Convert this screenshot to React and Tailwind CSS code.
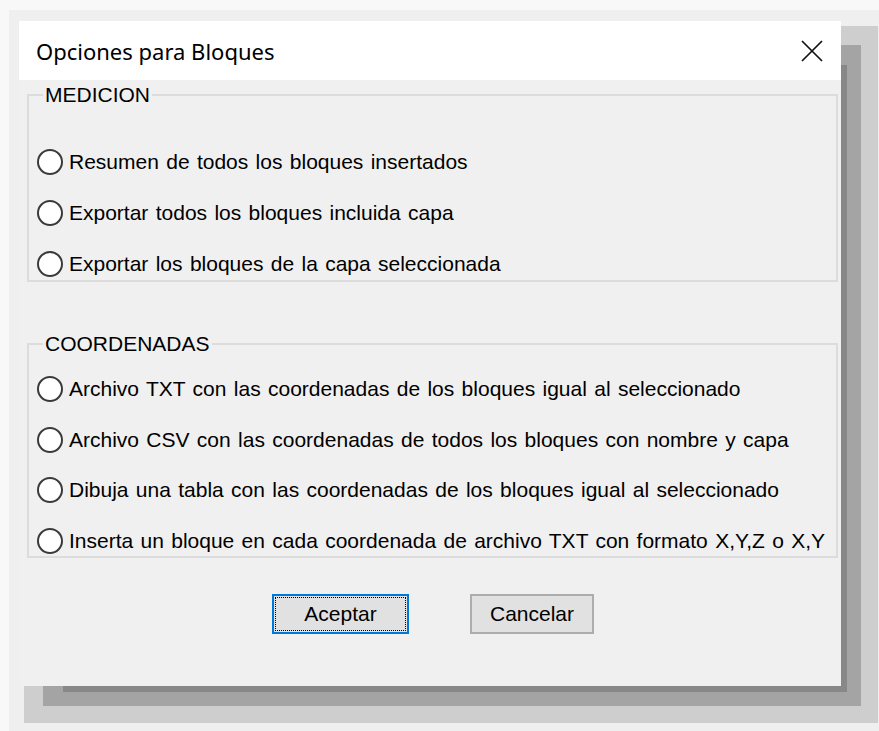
import React from "react";

const body = { fontFamily: '"Liberation Sans", Arial, sans-serif' };
const title = { fontFamily: '"Noto Sans", "Open Sans", sans-serif' };

function Radio({ label }) {
  return (
    <div className="flex h-[30px] items-center">
      <span className="h-[26px] w-[26px] shrink-0 rounded-full border-2 border-[#3a3a3a] bg-white" />
      <span className="ml-[6px] whitespace-nowrap text-[21px] leading-[22px] [word-spacing:1.5px] text-black">
        {label}
      </span>
    </div>
  );
}

function Group({ legend, className, children }) {
  return (
    <fieldset className={"ml-[8px] w-[811px] border-2 border-[#dcdcdc] " + className}>
      <legend className="ml-[14px] px-[2px] text-[21px] leading-[22px] text-black">{legend}</legend>
      {children}
    </fieldset>
  );
}

export default function App() {
  return (
    <div className="h-[731px] w-[879px] overflow-hidden bg-[#f8f8f8] pl-[9px] pt-[10px]" style={body}>
      <div className="h-[721px] bg-[#efefef] pl-[10px] pt-[11px]">
        <div className="flex h-[665px] w-[822px] flex-col bg-[#f0f0f0] shadow-[25px_25px_0_-19px_#888888,22px_22px_0_-2px_#a4a4a4,21px_21px_0_16px_#cecece]">
          {/* title bar */}
          <div className="flex h-[59px] shrink-0 items-center justify-between bg-white pl-[17px] pr-[18px]">
            <span className="text-[22px] leading-none text-black" style={title}>
              Opciones para Bloques
            </span>
            <svg width="22" height="22" viewBox="0 0 22 22" className="block">
              <path d="M1 1 L21 21 M21 1 L1 21" stroke="#111" strokeWidth="1.7" fill="none" />
            </svg>
          </div>

          <Group legend="MEDICION" className="mt-[4px]">
            <div className="flex flex-col gap-[21px] pl-[8px] pt-[41px] pb-[1px]">
              <Radio label="Resumen de todos los bloques insertados" />
              <Radio label="Exportar todos los bloques incluida capa" />
              <Radio label="Exportar los bloques de la capa seleccionada" />
            </div>
          </Group>

          <Group legend="COORDENADAS" className="mt-[51px]">
            <div className="flex flex-col gap-[20.5px] pl-[8px] pt-[19px]">
              <Radio label="Archivo TXT con las coordenadas de los bloques igual al seleccionado" />
              <Radio label="Archivo CSV con las coordenadas de todos los bloques con nombre y capa" />
              <Radio label="Dibuja una tabla con las coordenadas de los bloques igual al seleccionado" />
              <Radio label="Inserta un bloque en cada coordenada de archivo TXT con formato X,Y,Z o X,Y" />
            </div>
          </Group>

          {/* dialog buttons */}
          <div className="ml-[253px] mt-[36px] flex gap-[61px]">
            <button className="h-[40px] w-[137px] border-2 border-[#0078d7] bg-[#e1e1e1] p-[1px]">
              <span className="flex h-full w-full items-center justify-center border border-dotted border-black text-[21px] leading-none text-black">
                Aceptar
              </span>
            </button>
            <button className="flex h-[40px] w-[124px] items-center justify-center border-2 border-[#adadad] bg-[#e1e1e1] text-[21px] leading-none text-black">
              Cancelar
            </button>
          </div>
        </div>
      </div>
    </div>
  );
}
